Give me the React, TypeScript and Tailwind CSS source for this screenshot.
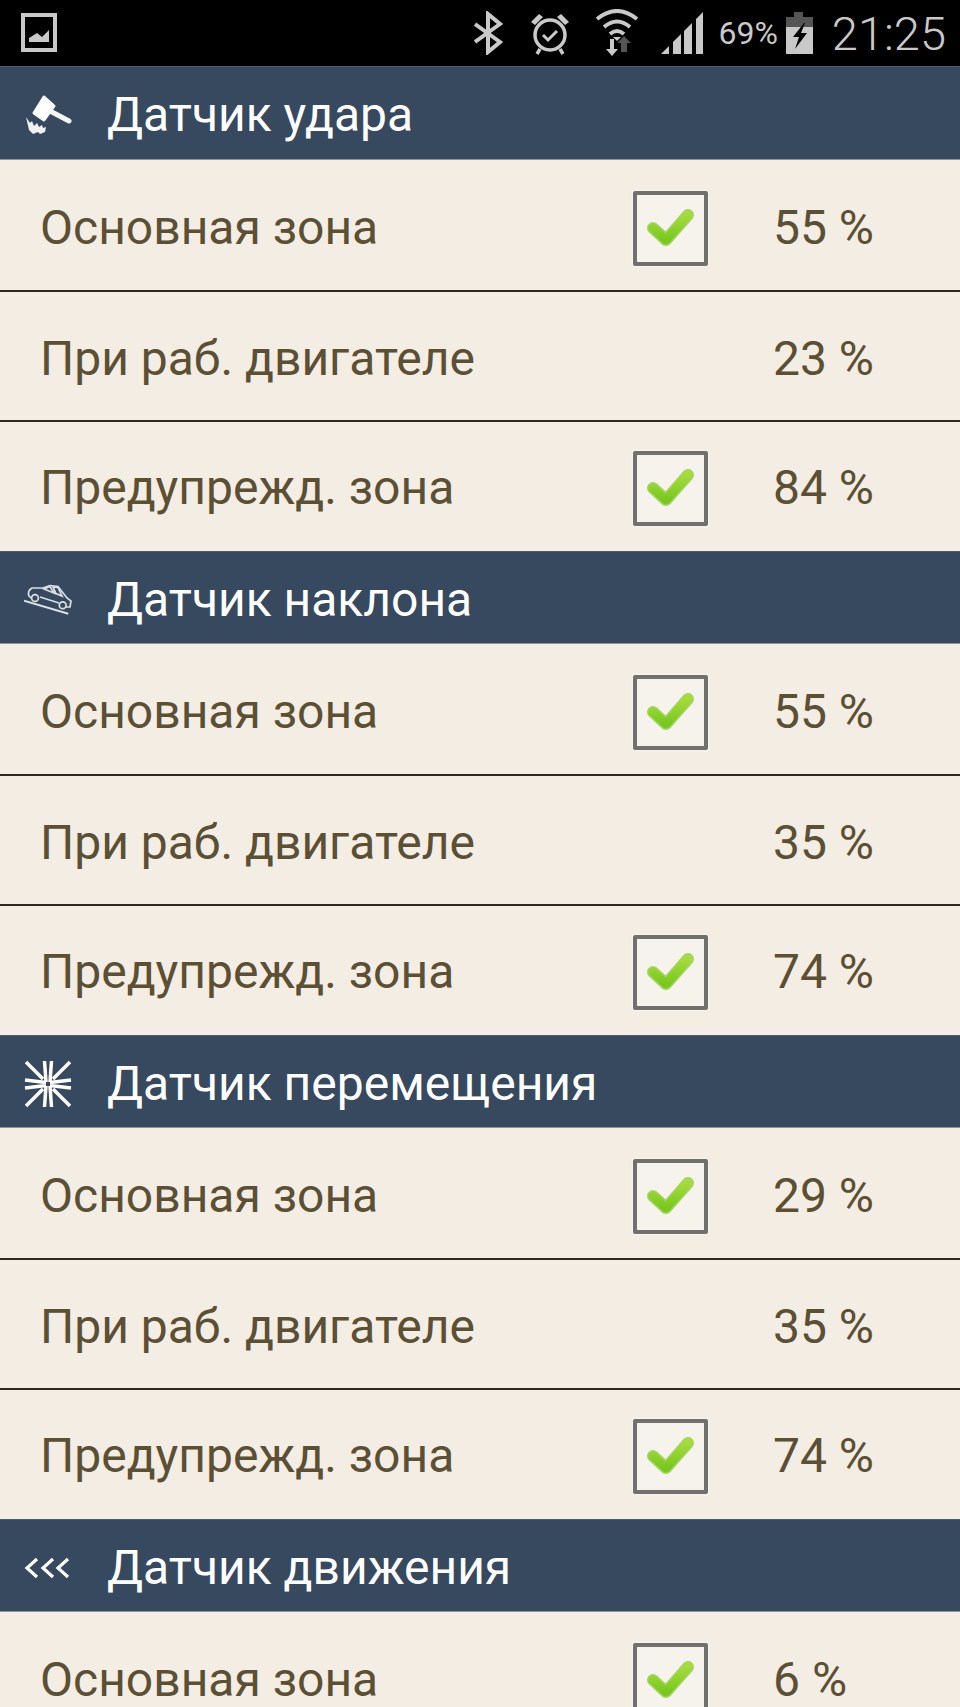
const GROUPS = [
  { title: 'Датчик удара', icon: 'hammer', headerClass: 'h-[94px]', values: ['55 %', '23 %', '84 %'], checks: [true, false, true] },
  { title: 'Датчик наклона', icon: 'car', headerClass: 'h-[93px]', values: ['55 %', '35 %', '74 %'], checks: [true, false, true] },
  { title: 'Датчик перемещения', icon: 'burst', headerClass: 'h-[93px]', values: ['29 %', '35 %', '74 %'], checks: [true, false, true] },
  { title: 'Датчик движения', icon: 'chevrons', headerClass: 'h-[93px]', values: ['6 %'], checks: [true] },
];

const LABELS = ['Основная зона', 'При раб. двигателе', 'Предупрежд. зона'];
const ROW_CLASSES = [
  'h-[132px] border-b-2 border-[#2e2a1e] pt-[6px]',
  'h-[130px] border-b-2 border-[#2e2a1e] pt-[6px]',
  'h-[129px] pt-[3px]',
];

function GroupIcon({ name }: { name: string }) {
  if (name === 'hammer') {
    return (
      <svg width="48" height="42" viewBox="0 0 48 42" fill="none">
        <path d="M20 3 L30 12 L20 26 L10 19 Z" fill="#fff" stroke="#fff" strokeWidth="3" strokeLinejoin="round" />
        <path d="M26 17 L45 27" stroke="#f4f5f6" strokeWidth="5" strokeLinecap="round" />
        <path d="M2 23 L6 29 L8 27 L10 32 L13 29 L15 33 L18 31 L19 34 L22 33 L21 38 L16 40 L14 38 L9 40 L5 36 Z" fill="#f0f2f4" />
      </svg>
    );
  }
  if (name === 'car') {
    return (
      <svg width="48" height="32" viewBox="0 0 48 32" fill="none" stroke="#d9dfe4" strokeWidth="1.7">
        <path d="M7 14 L5 12 Q3 7 8 4 L19 4 L26 1.5 L34 2.5 L43 14 L47 17 L46 23 L42 23 M35 19 L16 13" />
        <circle cx="11" cy="14" r="3.4" />
        <circle cx="38.7" cy="21.3" r="3.4" />
        <path d="M20 5 L26 2.5 L30 9 Z M29 3 L34 3.5 L38 12 L32 9.5 Z" />
        <path d="M0 16.7 L44.3 29.7" strokeWidth="2" />
      </svg>
    );
  }
  if (name === 'burst') {
    return (
      <svg width="48" height="48" viewBox="0 0 48 48" fill="none" stroke="#fff" strokeWidth="3.5">
        <path d="M2 2 L19 19 M46 2 L29 19 M2 46 L19 29 M46 46 L29 29" />
        <path d="M20.5 1 L22 22 M27.5 1 L26 22 M20.5 47 L22 26 M27.5 47 L26 26" />
        <path d="M1 20 L22 22.5 M47 20 L26 22.5 M1 28 L22 25.5 M47 28 L26 25.5" />
      </svg>
    );
  }
  return (
    <svg width="48" height="22" viewBox="0 0 48 22" fill="none" stroke="#fff" strokeWidth="3.2">
      <path d="M13 2 L3 11 L13 20 M29 2 L19 11 L29 20 M44 2 L34 11 L44 20" />
    </svg>
  );
}

function Check() {
  return (
    <div className="flex h-[75px] w-[75px] items-center justify-center rounded-[2px] border-[4px] border-[#72706c] bg-[#f6f2ec] shadow-[0_0_3px_#ffffff]">
      <svg width="52" height="44" viewBox="0 0 52 44" fill="none">
        <defs>
          <linearGradient id="tick" x1="0" y1="0" x2="0" y2="1">
            <stop offset="0" stopColor="#a6dc3a" />
            <stop offset="1" stopColor="#78c81e" />
          </linearGradient>
        </defs>
        <path d="M8 22 L21 34 L43 9" stroke="#a4d468" strokeWidth="12" strokeLinejoin="round" strokeLinecap="round" />
        <path d="M8 22 L21 34 L43 9" stroke="url(#tick)" strokeWidth="9" strokeLinejoin="round" strokeLinecap="round" />
      </svg>
    </div>
  );
}

function StatusBar() {
  return (
    <div className="flex h-[66px] items-center bg-black pl-[21px] pr-[14px] text-[#c9c9c9]">
      <svg width="36" height="40" viewBox="0 0 36 40">
        <rect x="2" y="2" width="32" height="35" fill="none" stroke="#c9c9c9" strokeWidth="4" />
        <path d="M8 29 L8 25 L16 20 L21 24 L28 17 L28 29Z" fill="#c9c9c9" />
      </svg>
      <div className="ml-auto flex items-center">
        <svg width="30" height="44" viewBox="0 0 30 44" fill="none" stroke="#c9c9c9" strokeWidth="4">
          <path d="M1 13 L26 31 L14 41 L14 3 L26 13 L1 31" />
        </svg>
        <svg className="ml-[26px]" width="40" height="44" viewBox="0 0 40 44" fill="none" stroke="#c9c9c9" strokeWidth="3.5">
          <circle cx="20" cy="24" r="15" />
          <path d="M13 24 L18 29 L27 20" strokeWidth="3" />
          <path d="M1 11 L9 3 L13 6 L5 14Z M39 11 L31 3 L27 6 L35 14Z" fill="#c9c9c9" stroke="none" />
          <path d="M10 38 L7 43 M30 38 L33 43" />
        </svg>
        <svg className="ml-[24px]" width="46" height="48" viewBox="0 0 46 48" fill="none">
          <path d="M3 10 Q23 -6 43 10 M10 18 Q23 7 36 18 M16 25 Q23 19 30 25" stroke="#c9c9c9" strokeWidth="4" />
          <path d="M19 28 L27 28 L23 32Z" fill="#c9c9c9" />
          <path d="M16 30 H20 V40 H24 L18 47 L12 40 H16 Z" fill="#c9c9c9" />
          <path d="M30 27 L37 34 H33 V43 H27 V34 H23 Z" fill="#555" />
        </svg>
        <svg className="ml-[21px]" width="42" height="42" viewBox="0 0 42 42" fill="#c9c9c9">
          <path d="M0 42 L8 34 L8 42Z M12 30 L20 22 L20 42 L12 42Z M23 19 L31 11 L31 42 L23 42Z M35 7 L42 0 L42 42 L35 42Z" />
        </svg>
        <span className="ml-[15px] text-[32px] leading-none">69%</span>
        <svg className="ml-[8px]" width="27" height="42" viewBox="0 0 27 42">
          <rect x="8" y="0" width="9" height="5" fill="#555" />
          <rect x="0" y="5" width="27" height="10" fill="#555" />
          <rect x="0" y="15" width="27" height="27" fill="#c9c9c9" />
          <path d="M18 11 L7 25 L13 25 L9 37 L21 21 L15 21 L19 11Z" fill="#000" />
        </svg>
        <span className="ml-[19px] text-[47px] font-light leading-none">21:25</span>
      </div>
    </div>
  );
}

export default function App() {
  return (
    <div className="h-[1707px] overflow-hidden bg-[#f4ede4] font-['Roboto',sans-serif]">
      <StatusBar />
      {GROUPS.map((group) => (
        <div key={group.title}>
          <div className={`flex items-center border-t border-b border-t-[#4c5c6f] border-b-[#8d969d] bg-[#36495e] pt-[4px] ${group.headerClass}`}>
            <div className="flex w-[107px] justify-center pr-[12px]">
              <GroupIcon name={group.icon} />
            </div>
            <span className="text-[48px] text-white">{group.title}</span>
          </div>
          {group.values.map((value, i) => (
            <div key={LABELS[i]} className={`flex items-center pl-[40px] text-[48px] text-[#5b4f34] ${ROW_CLASSES[i]}`}>
              <span className="w-[593px]">{LABELS[i]}</span>
              <div className="w-[142px]">{group.checks[i] && <Check />}</div>
              <span className="-ml-[2px]">{value}</span>
            </div>
          ))}
        </div>
      ))}
    </div>
  );
}
